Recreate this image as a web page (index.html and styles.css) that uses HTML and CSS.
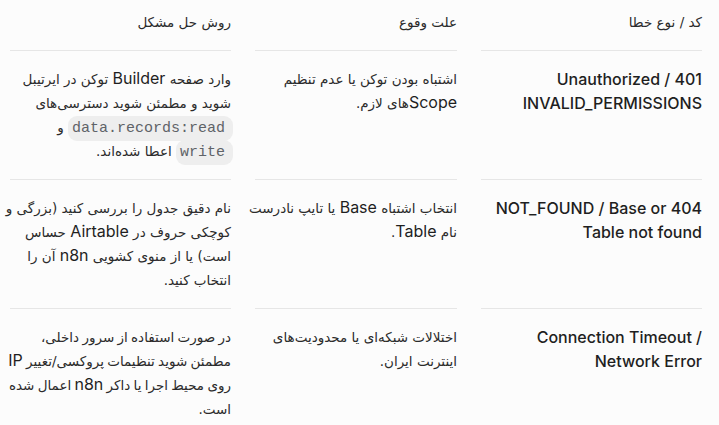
FILE: index.html
```html
<!DOCTYPE html>
<html lang="fa" dir="rtl">
<head>
<meta charset="utf-8">
<link rel="stylesheet" href="styles.css">
</head>
<body>
<div class="table">
  <div class="th">کد / نوع خطا</div>
  <div class="th">علت وقوع</div>
  <div class="th">روش حل مشکل</div>

  <div class="td code">401 Unauthorized / INVALID_PERMISSIONS</div>
  <div class="td">اشتباه بودن توکن یا عدم تنظیم<br><span class="lat">Scope</span>های لازم.</div>
  <div class="td">وارد صفحه <span class="lat">Builder</span> توکن در ایرتیبل<br>شوید و مطمئن شوید دسترسی‌های<br><span class="chip">data.records:read</span> و<br><span class="chip">write</span> اعطا شده‌اند.</div>

  <div class="td code">404 NOT_FOUND / Base or Table not found</div>
  <div class="td">انتخاب اشتباه <span class="lat">Base</span> یا تایپ نادرست<br>نام <span class="lat">Table</span>.</div>
  <div class="td">نام دقیق جدول را بررسی کنید (بزرگی و<br>کوچکی حروف در <span class="lat">Airtable</span> حساس<br>است) یا از منوی کشویی <span class="lat">n8n</span> آن را<br>انتخاب کنید.</div>

  <div class="td code">Connection Timeout / Network Error</div>
  <div class="td">اختلالات شبکه‌ای یا محدودیت‌های<br>اینترنت ایران.</div>
  <div class="td tight">در صورت استفاده از سرور داخلی،<br>مطمئن شوید تنظیمات پروکسی/تغییر <span class="lat">IP</span><br>روی محیط اجرا یا داکر <span class="lat">n8n</span> اعمال شده<br>است.</div>
</div>
</body>
</html>
```

FILE: styles.css
```css
html, body {
  margin: 0;
  padding: 0;
  background: #fcfcfc;
}
body {
  font-family: "DejaVu Sans", sans-serif;
  color: #2b2b2b;
}
.table {
  display: grid;
  grid-template-columns: 221px 202px 221px;
  column-gap: 24px;
  padding: 0 17px 0 10px;
}
.th {
  font-size: 13.5px;
  line-height: 24px;
  padding: 10px 0 16px;
  border-bottom: 1px solid #e6e6e6;
}
.td {
  font-size: 13.5px;
  line-height: 24px;
  padding: 16px 0;
  border-bottom: 1px solid #e6e6e6;
  white-space: nowrap;
}
.td.tight {
  word-spacing: -1px;
}
.td.code {
  font-family: "Inter", sans-serif;
  font-size: 16px;
  font-weight: 500;
  color: #1f1f1f;
  white-space: normal;
}
.lat {
  font-family: "Inter", sans-serif;
  font-size: 16px;
  line-height: 16px;
  color: #1f1f1f;
  word-spacing: normal;
}
.chip {
  font-family: "Liberation Mono", monospace;
  font-size: 15px;
  line-height: 16px;
  color: #5f6368;
  background: #eeeeee;
  border-radius: 9px;
  padding: 4px 8px 4px 4px;
  margin-right: -2px;
}
```
